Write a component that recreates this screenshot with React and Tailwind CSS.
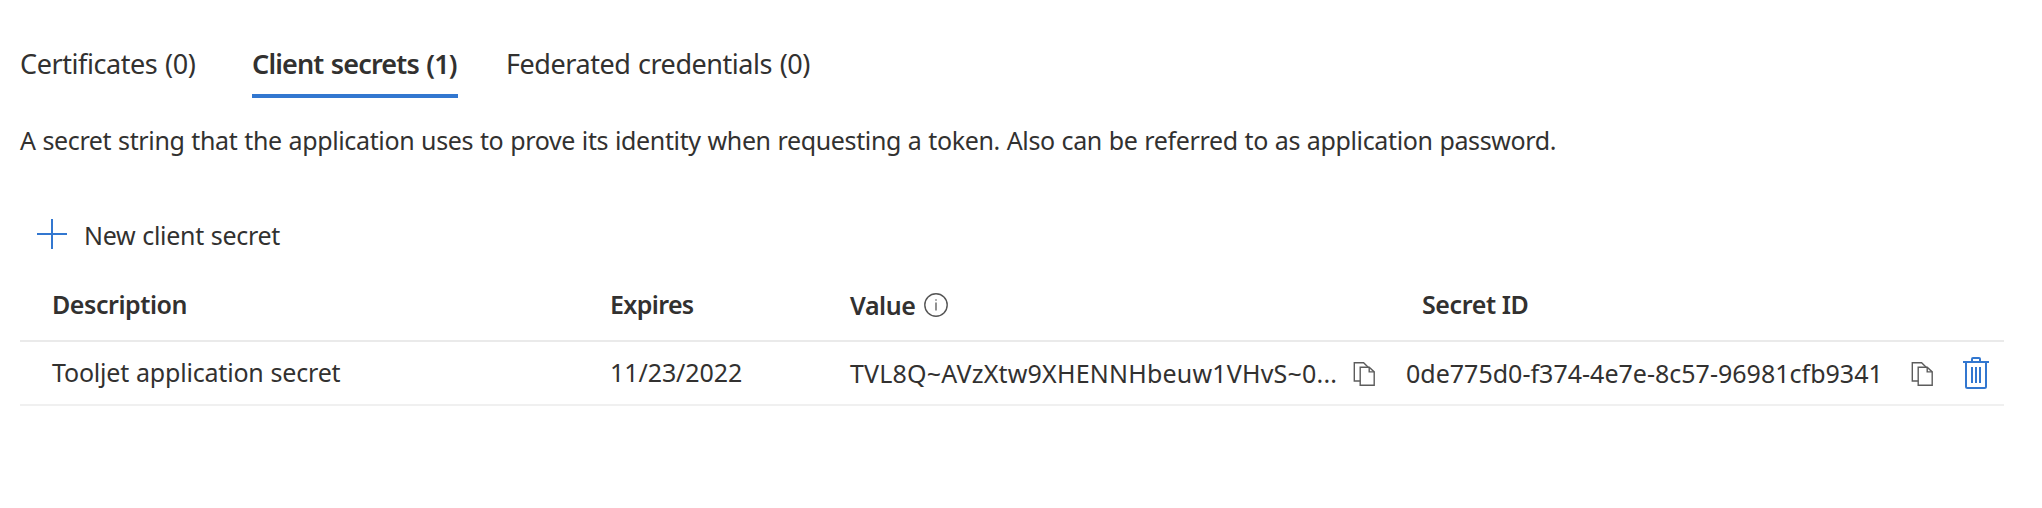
import React from "react";

function PlusIcon() {
  return (
    <svg className="h-[30px] w-[30px] shrink-0" viewBox="0 0 30 30" stroke="#3277d0" strokeWidth="2" fill="none">
      <path d="M15 0V30M0 15H30" />
    </svg>
  );
}

function InfoIcon() {
  return (
    <svg className="mt-0.5 ml-2 h-6 w-6 shrink-0" viewBox="0 0 24 24" fill="none" stroke="#555555">
      <circle cx="12" cy="12" r="11.2" strokeWidth="1.4" />
      <path d="M12 9.6V17.6" strokeWidth="1.3" />
      <circle cx="12" cy="7" r="0.8" fill="#555555" stroke="none" />
    </svg>
  );
}

function CopyIcon() {
  return (
    <svg className="h-6 w-[22px] shrink-0" viewBox="0 0 22 24" fill="none" stroke="#5c5c5c" strokeWidth="1.4">
      <path d="M7.2 19H1.3V0.8H10.6L15.2 5.3" />
      <path d="M7.2 5.2H16.2L21.2 9.9V23.2H7.2Z" />
      <path d="M16.2 5.2V9.9H21.2" />
    </svg>
  );
}

function TrashIcon() {
  return (
    <svg className="h-8 w-[26px] shrink-0" viewBox="0 0 26 32" fill="none" stroke="#3277d0" strokeWidth="2">
      <path d="M0 5H26M9 5V2Q9 1 10 1H16Q17 1 17 2V5" />
      <path d="M3 5V29.5Q3 31 4.5 31H21.5Q23 31 23 29.5V5" />
      <path d="M9 10V26M13 10V26M17 10V26" />
    </svg>
  );
}

export default function App() {
  return (
    <main className="h-[508px] w-[2042px] overflow-hidden bg-white pl-5 pr-[38px] pt-[46px] font-['Noto_Sans',sans-serif] text-[25px] leading-8 whitespace-nowrap text-[#323130]">
      <nav className="flex h-[52px] text-[27px] leading-9">
        <button className="mr-[44px] w-[188px] pb-4 text-left tracking-[-0.42px] [word-spacing:1px]">Certificates (0)</button>
        <button className="w-[206px] border-b-4 border-[#3277d0] pb-3 text-left font-semibold tracking-[-0.84px] [word-spacing:1.2px]">
          Client secrets (1)
        </button>
        <button className="ml-12 pb-4 text-left tracking-[-0.45px] [word-spacing:1px]">Federated credentials (0)</button>
      </nav>

      <p className="mt-[26px] tracking-[-0.367px] [word-spacing:0.7px]">
        A secret string that the application uses to prove its identity when requesting a token. Also can be referred to
        as application password.
      </p>

      <button className="mt-[63px] flex h-8 items-start pl-[17px]">
        <PlusIcon />
        <span className="ml-[17px] tracking-[-0.3px] [word-spacing:0.7px]">New client secret</span>
      </button>

      <section className="mt-[17px]">
        <div className="grid h-[74px] grid-cols-[558px_240px_555px_1fr] items-center border-b-2 border-[#eaeaea] pl-8 font-semibold">
          <div className="tracking-[-0.45px]">Description</div>
          <div className="tracking-[-0.63px]">Expires</div>
          <div className="flex items-center">
            <span className="pt-0.5 tracking-[-0.4px]">Value</span>
            <InfoIcon />
          </div>
          <div className="pl-[17px] tracking-[-0.4px]">Secret ID</div>
        </div>
        <div className="grid h-16 grid-cols-[558px_240px_503px_53px_505px_52px_1fr] items-center border-b-2 border-[#f0f0f0] pl-8">
          <div className="pb-0.5 tracking-[-0.2px] [word-spacing:0.7px]">Tooljet application secret</div>
          <div className="pb-0.5 tracking-[-0.08px]">11/23/2022</div>
          <div className="tracking-[0.2px]">TVL8Q~AVzXtw9XHENNHbeuw1VHvS~0...</div>
          <button className="pt-0.5"><CopyIcon /></button>
          <div className="tracking-[0.01px]">0de775d0-f374-4e7e-8c57-96981cfb9341</div>
          <button className="pt-0.5"><CopyIcon /></button>
          <button><TrashIcon /></button>
        </div>
      </section>
    </main>
  );
}
